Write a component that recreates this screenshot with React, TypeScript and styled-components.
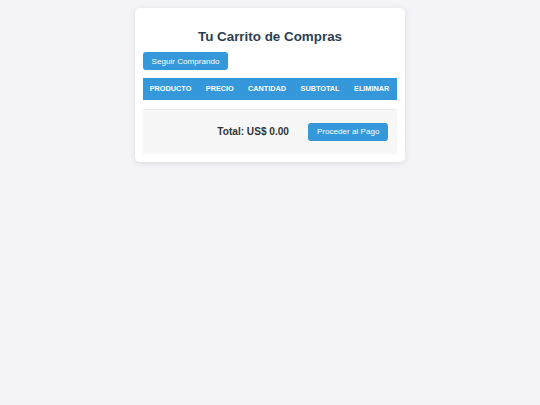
import React from 'react'
import styled, { createGlobalStyle } from 'styled-components'

const GlobalStyle = createGlobalStyle`
    body {
        margin: 0;
        background: #f4f4f8;
        font-family: "Liberation Sans", Arial, sans-serif;
    }
`

const Page = styled.main`
    padding: 8px;
`

const Card = styled.section`
    width: 270px;
    box-sizing: border-box;
    margin: 0 auto;
    padding: 8px;
    background: #ffffff;
    border-radius: 5px;
    box-shadow: 0 1px 6px rgba(0, 0, 0, 0.1);
`

const Title = styled.h1`
    margin: 13px 0 8px;
    text-align: center;
    font-size: 13.4px;
    line-height: 15px;
    font-weight: bold;
    color: #2c3e50;
`

const Button = styled.button`
    display: block;
    border: none;
    border-radius: 3px;
    background: #3498db;
    color: #ffffff;
    font-family: inherit;
    font-size: 8.1px;
    line-height: 9px;
    padding: 4.5px 8.5px;
    cursor: pointer;
`

const Table = styled.table`
    width: 100%;
    margin: 8px 0 8.7px;
    border-collapse: collapse;

    th {
        background: #3498db;
        color: #ffffff;
        font-size: 7.3px;
        line-height: 8.5px;
        font-weight: bold;
        text-transform: uppercase;
        text-align: left;
        padding: 6.7px;
    }
`

const Footer = styled.div`
    display: flex;
    justify-content: flex-end;
    align-items: center;
    gap: 19.5px;
    padding: 13.3px 9px;
    background: #f7f7f7;
    border-top: 1px solid #ebebeb;
`

const Total = styled.strong`
    font-size: 10.1px;
    color: #333333;
`

const columns = ['Producto', 'Precio', 'Cantidad', 'Subtotal', 'Eliminar']

const App = () => {
  return (
    <Page>
        <GlobalStyle />
        <Card>
            <Title>Tu Carrito de Compras</Title>
            <Button>Seguir Comprando</Button>
            <Table>
                <thead>
                    <tr>
                        {columns.map(c => <th key={c}>{c}</th>)}
                    </tr>
                </thead>
                <tbody></tbody>
            </Table>
            <Footer>
                <Total>Total: US$ 0.00</Total>
                <Button>Proceder al Pago</Button>
            </Footer>
        </Card>
    </Page>
  )
}

export default App
